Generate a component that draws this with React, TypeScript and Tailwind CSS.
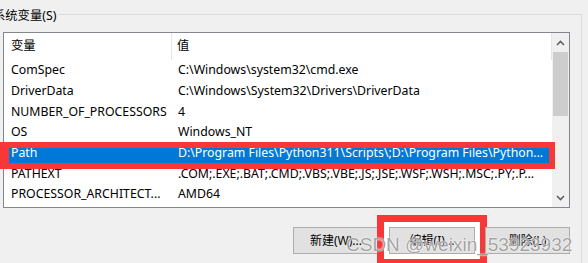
import React from "react";

const rows: [string, string][] = [
  ["ComSpec", "C:\\Windows\\system32\\cmd.exe"],
  ["DriverData", "C:\\Windows\\System32\\Drivers\\DriverData"],
  ["NUMBER_OF_PROCESSORS", "4"],
  ["OS", "Windows_NT"],
  ["Path", "D:\\Program Files\\Python311\\Scripts\\;D:\\Program Files\\Python..."],
  ["PATHEXT", ".COM;.EXE;.BAT;.CMD;.VBS;.VBE;.JS;.JSE;.WSF;.WSH;.MSC;.PY;.P..."],
  ["PROCESSOR_ARCHITECT...", "AMD64"],
];

const App: React.FC = () => {
  return (
    <div className="h-[263px] w-[588px] overflow-hidden bg-[#f0f0f0] pt-[14px] font-['Noto_Sans','Noto_Sans_CJK_SC',sans-serif] text-[12.3px] text-black">
      {/* group box */}
      <div className="relative -ml-[8px] h-[300px] w-[590px] border border-[#dcdcdc] pl-[10px] pt-[17px]">
        <span className="absolute -top-[8px] left-0 bg-[#f0f0f0] pr-[2px] leading-[18px]">
          系统变量(S)
        </span>

        {/* list */}
        <div className="relative flex h-[176px] w-[567px] border border-[#828790] bg-white">
          <div className="min-w-0 flex-1">
            <div className="flex h-[27px] items-center">
              <div className="flex h-full w-[168px] items-center border-r border-[#e5e5e5] pl-[7px]">变量</div>
              <div className="flex h-full flex-1 items-center border-r border-[#e5e5e5] pl-[5px]">值</div>
            </div>
            {rows.map(([name, value]) => {
              const sel = name === "Path";
              return (
                <div
                  key={name}
                  className={
                    sel
                      ? "flex h-[20.7px] items-center bg-[#0078d7] text-white"
                      : "flex h-[20.7px] items-center"
                  }
                >
                  <div className="w-[168px] shrink-0 whitespace-nowrap pl-[7px]">{name}</div>
                  <div className="min-w-0 flex-1 truncate whitespace-nowrap pl-[6px]">{value}</div>
                </div>
              );
            })}
          </div>

          {/* scrollbar */}
          <div className="flex w-[17px] shrink-0 flex-col items-center bg-[#f0f0f0]">
            <div className="flex h-[19px] w-full items-center justify-center">
              <svg width="9" height="6" viewBox="0 0 9 6">
                <path d="M1 5 L4.5 1.5 L8 5" fill="none" stroke="#606060" strokeWidth="1.6" />
              </svg>
            </div>
            <div className="h-[64px] w-[15px] bg-[#cdcdcd]" />
            <div className="flex-1" />
            <div className="flex h-[19px] w-full items-center justify-center">
              <svg width="9" height="6" viewBox="0 0 9 6">
                <path d="M1 1 L4.5 4.5 L8 1" fill="none" stroke="#606060" strokeWidth="1.6" />
              </svg>
            </div>
          </div>

          {/* red highlight around Path row */}
          <div className="absolute -left-[4px] top-[109px] h-[27px] w-[555px] border-[6px] border-l-[9px] border-[#f83838]" />
        </div>

        {/* buttons */}
        <div className="relative mt-[19px] flex gap-[10px] pl-[290px] text-[12px]">
          <button className="h-[27px] w-[86px] border border-[#adadad] bg-[#e1e1e1]">新建(W)...</button>
          <div className="-m-[12px] border-[7px] border-[#f83838] bg-white p-[5px]">
            <button className="h-[27px] w-[86px] border border-[#adadad] bg-[#e1e1e1]">编辑(I)...</button>
          </div>
          <button className="h-[27px] w-[85px] border border-[#adadad] bg-[#e1e1e1]">删除(L)</button>

          <span className="pointer-events-none absolute left-[343px] top-[4px] whitespace-nowrap font-['Liberation_Sans',sans-serif] text-[19px] text-[#7a7a7a]/70 [text-shadow:0_0_2px_#fff,0_0_1px_#fff]">
            CSDN @weixin_53923932
          </span>
        </div>
      </div>
    </div>
  );
};

export default App;
